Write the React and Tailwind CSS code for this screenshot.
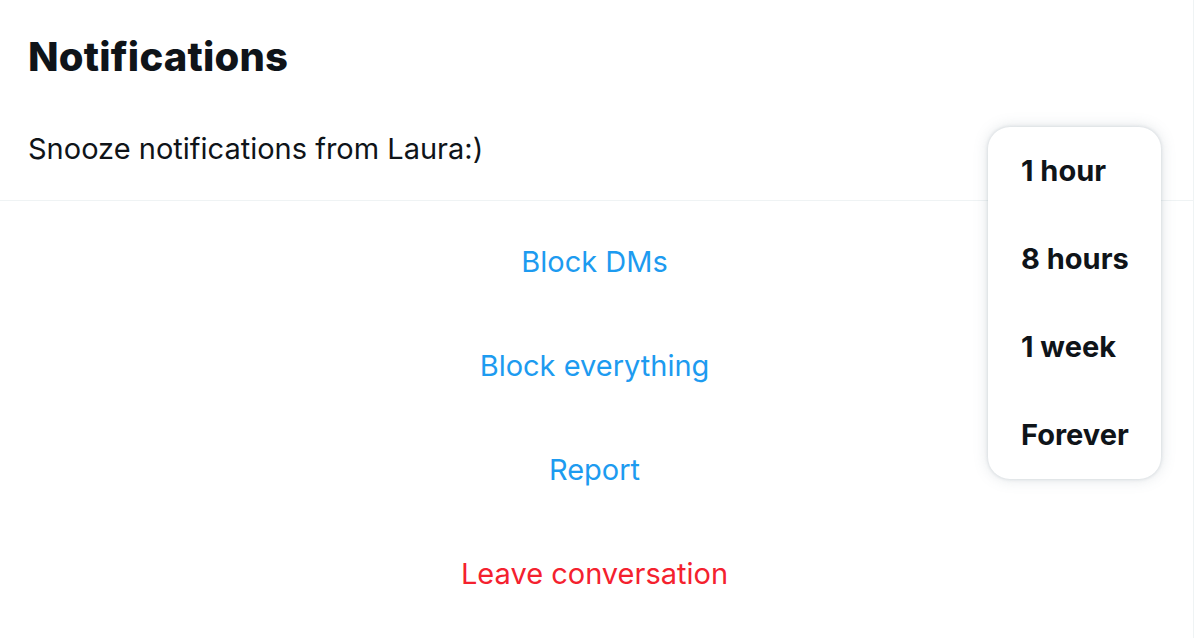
export default function App() {
  const rows = [
    { t: "Block DMs", c: "text-[#1d9bf0]" },
    { t: "Block everything", c: "text-[#1d9bf0]" },
    { t: "Report", c: "text-[#1d9bf0]" },
    { t: "Leave conversation", c: "text-[#f4212e]" },
  ];
  const opts = ["1 hour", "8 hours", "1 week", "Forever"];
  return (
    <div
      className="relative w-[1200px] h-[638px] bg-white overflow-hidden"
      style={{ fontFamily: "Inter, 'Noto Sans', sans-serif" }}
    >
      <div className="w-[1194px] h-full border-r border-[#eff3f4]">
        <div className="h-[201px] border-b border-[#eff3f4] px-[28px]">
          <div className="h-[112px] flex items-center pt-[1px]">
            <h1 className="text-[40px] font-extrabold text-[#0f1419] tracking-[0.2px]">
              Notifications
            </h1>
          </div>
          <div className="h-[72px] flex items-center pt-[2px]">
            <span className="text-[29px] text-[#0f1419]">Snooze notifications from Laura:)</span>
          </div>
        </div>
        <div className="pt-[9px] pr-[4px] flex flex-col">
          {rows.map((r) => (
            <div key={r.t} className="h-[104px] flex items-center justify-center">
              <span className={`text-[29px] ${r.c}`}>{r.t}</span>
            </div>
          ))}
        </div>
      </div>
      <div className="absolute left-[988px] top-[127px] w-[173px] rounded-[22px] bg-white shadow-[0_0_15px_rgba(101,119,134,0.2),0_0_3px_1px_rgba(101,119,134,0.15)] flex flex-col">
        {opts.map((o) => (
          <div key={o} className="h-[88px] flex items-center pl-[33px]">
            <span className="text-[29px] font-bold text-[#0f1419]">{o}</span>
          </div>
        ))}
      </div>
    </div>
  );
}
